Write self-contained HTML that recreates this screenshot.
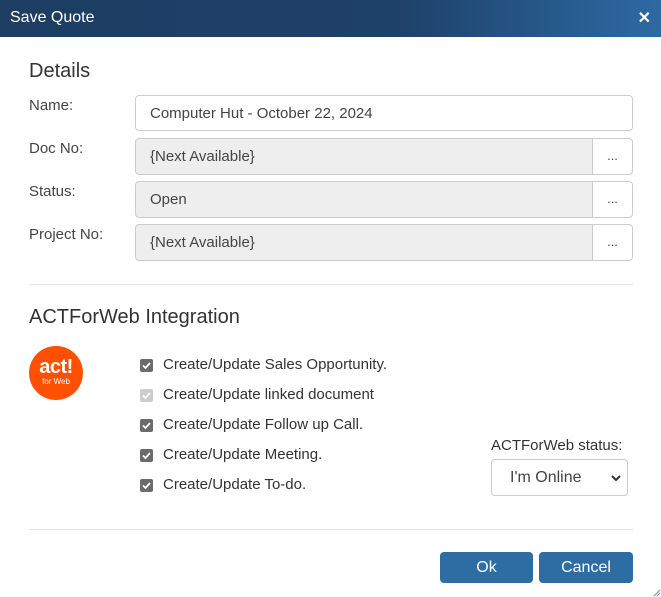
<!DOCTYPE html>
<html><head><style>
*{box-sizing:border-box;margin:0;padding:0}
body{width:661px;height:597px;background:#fff;font-family:"Liberation Sans",Arial,sans-serif;color:#333;position:relative;overflow:hidden}
.hdr{position:absolute;left:0;top:0;width:661px;height:37px;background:linear-gradient(90deg,#1d3e62 0%,#1e4169 60%,#2d6aa2 100%);color:#fff;font-size:16px}
.hdr .t{position:absolute;left:10px;top:9px}
.hdr .x{position:absolute;right:10px;top:8px;font-weight:bold;font-size:16px}
.abs{position:absolute}
h2{position:absolute;font-weight:normal;font-size:20px;color:#333}
.lbl{position:absolute;left:29px;font-size:15px;color:#444}
.inp{position:absolute;left:135px;border:1px solid #ccc;border-radius:4px;font-size:15px;padding-left:14px;line-height:35px;height:37px;color:#444}
.ro{background:#eee;width:458px;border-radius:4px 0 0 4px}
.btn3{position:absolute;left:592px;width:41px;height:37px;border:1px solid #ccc;border-radius:0 4px 4px 0;background:#fff;font-size:13px;text-align:center;line-height:33px;color:#444}
.sep{position:absolute;left:29px;width:604px;height:1px;background:#e5e5e5}
.cb{position:absolute;left:140px;width:13px;height:13px;border-radius:2px;background:#6b6b6b}
.cb.d{background:#ccc}
.cb svg{position:absolute;left:1px;top:1px}
.cl{position:absolute;left:163px;font-size:15px;color:#333}
.b{position:absolute;top:552px;height:31px;background:#2e6da4;border-radius:4px;color:#fff;font-size:16px;text-align:center;line-height:31px}
</style></head><body>
<div class="hdr"><span class="t">Save Quote</span><span class="x">✕</span></div>
<h2 style="left:29px;top:60px">Details</h2>
<div class="lbl" style="top:97px">Name:</div>
<div class="inp" style="top:95px;width:498px;height:36px">Computer Hut - October 22, 2024</div>
<div class="lbl" style="top:140px">Doc No:</div>
<div class="inp ro" style="top:138px">{Next Available}</div><div class="btn3" style="top:138px">...</div>
<div class="lbl" style="top:183px">Status:</div>
<div class="inp ro" style="top:181px">Open</div><div class="btn3" style="top:181px">...</div>
<div class="lbl" style="top:226px">Project No:</div>
<div class="inp ro" style="top:224px">{Next Available}</div><div class="btn3" style="top:224px">...</div>
<div class="sep" style="top:284px"></div>
<h2 style="left:29px;top:306px">ACTForWeb Integration</h2>
<div class="abs" style="left:29px;top:346px;width:54px;height:54px;border-radius:50%;background:#fe5000;color:#fff;text-align:center">
<div style="font-weight:bold;font-size:20px;margin-top:11px;line-height:20px;letter-spacing:-0.5px">act!</div>
<div style="font-size:8px;line-height:9px">for Web</div></div>
<div class="cb" style="top:359px"><svg width="11" height="11"><path d="M2 5.5 L4.5 8 L9 3" stroke="#fff" stroke-width="1.8" fill="none"/></svg></div>
<div class="cl" style="top:356px">Create/Update Sales Opportunity.</div>
<div class="cb d" style="top:389px"><svg width="11" height="11"><path d="M2 5.5 L4.5 8 L9 3" stroke="#fff" stroke-width="1.8" fill="none"/></svg></div>
<div class="cl" style="top:386px">Create/Update linked document</div>
<div class="cb" style="top:419px"><svg width="11" height="11"><path d="M2 5.5 L4.5 8 L9 3" stroke="#fff" stroke-width="1.8" fill="none"/></svg></div>
<div class="cl" style="top:416px">Create/Update Follow up Call.</div>
<div class="cb" style="top:449px"><svg width="11" height="11"><path d="M2 5.5 L4.5 8 L9 3" stroke="#fff" stroke-width="1.8" fill="none"/></svg></div>
<div class="cl" style="top:446px">Create/Update Meeting.</div>
<div class="cb" style="top:479px"><svg width="11" height="11"><path d="M2 5.5 L4.5 8 L9 3" stroke="#fff" stroke-width="1.8" fill="none"/></svg></div>
<div class="cl" style="top:476px">Create/Update To-do.</div>
<div class="abs" style="left:491px;top:437px;font-size:15px;color:#333">ACTForWeb status:</div>
<div class="abs" style="left:491px;top:459px;width:137px;height:37px;border:1px solid #ccc;border-radius:4px;font-size:16px;color:#444;line-height:35px;padding-left:18px">I'm Online
<svg style="position:absolute;right:6px;top:14px" width="10" height="8"><path d="M1 2 L5 6 L9 2" stroke="#333" stroke-width="2" fill="none"/></svg></div>
<div class="sep" style="top:529px"></div>
<div class="b" style="left:440px;width:93px">Ok</div>
<div class="b" style="left:539px;width:94px">Cancel</div>
<svg class="abs" style="left:651px;top:587px" width="10" height="10"><path d="M9 3 L3 9 M9 6 L6 9" stroke="#888" stroke-width="1"/></svg>
</body></html>
